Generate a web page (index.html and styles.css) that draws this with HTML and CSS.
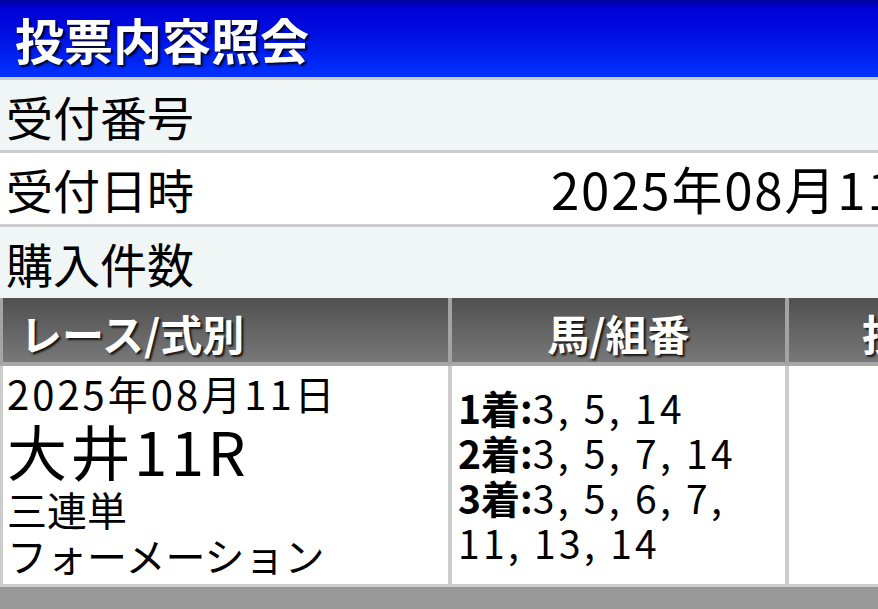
FILE: index.html
```html
<!DOCTYPE html>
<html lang="ja">
<head>
<meta charset="utf-8">
<title>投票内容照会</title>
<link rel="stylesheet" href="styles.css">
</head>
<body>
<div class="page">
  <header class="title-bar">
    <h1 class="title">投票内容照会</h1>
  </header>

  <section class="info">
    <div class="info-row alt">
      <span class="info-label">受付番号</span>
      <span class="info-value"></span>
    </div>
    <div class="info-row">
      <span class="info-label">受付日時</span>
      <span class="info-value">2025年08月11日 17:23</span>
    </div>
    <div class="info-row alt">
      <span class="info-label">購入件数</span>
      <span class="info-value"></span>
    </div>
  </section>

  <section class="bets" role="table">
    <div class="head-cell head-race" role="columnheader">レース/式別</div>
    <div class="head-cell head-center" role="columnheader">馬/組番</div>
    <div class="head-cell head-center" role="columnheader">投票金額</div>

    <div class="body-cell race" role="cell">
      <span class="race-date">2025年08月11日</span>
      <span class="race-name">大井11R</span>
      <span class="race-type">三連単</span>
      <span class="race-type">フォーメーション</span>
    </div>
    <div class="body-cell combo" role="cell">
      <p class="combo-line"><b>1着:</b>3, 5, 14</p>
      <p class="combo-line"><b>2着:</b>3, 5, 7, 14</p>
      <p class="combo-line"><b>3着:</b>3, 5, 6, 7, 11, 13, 14</p>
    </div>
    <div class="body-cell amount" role="cell"></div>
  </section>

  <footer class="footer-bar"></footer>
</div>
</body>
</html>
```

FILE: styles.css
```css
html, body {
  margin: 0;
  padding: 0;
  overflow: hidden;
  background: #999999;
}

body {
  font-family: "Noto Sans CJK JP", "Noto Sans", sans-serif;
  color: #000;
}

.page {
  width: 1110px;
}

/* ---- title bar ---- */
.title-bar {
  height: 77px;
  display: flex;
  align-items: center;
  padding-left: 15px;
  background: linear-gradient(to bottom, #00009a 0px, #0000d6 8px, #0010e2 45%, #0032ff 100%);
}

.title {
  margin: 0;
  font-size: 49px;
  font-weight: 700;
  line-height: 1;
  color: #fff;
  text-shadow: 2px 2px 2px rgba(0, 0, 0, 0.85);
}

/* ---- receipt info rows ---- */
.info-row {
  display: grid;
  grid-template-columns: 545px 1fr;
  align-items: center;
  height: 71px;
  border-top: 3px solid #cccccc;
  background: #ffffff;
  padding-left: 6px;
  box-sizing: content-box;
  font-size: 47px;
  line-height: 1;
  white-space: nowrap;
}

.info-row:first-child {
  height: 70px;
}

.info-row.alt {
  background: #f0f5f5;
}

.info-value {
  font-size: 51px;
  letter-spacing: 1.8px;
}

/* ---- bet table ---- */
.bets {
  display: grid;
  grid-template-columns: 448px 337px 318px;
  grid-template-rows: 68px 221px;
}

.head-cell {
  box-sizing: border-box;
  display: flex;
  align-items: center;
  padding-top: 6px;
  border-left: 4px solid #a4a4a4;
  border-bottom: 4px solid #a8a8a8;
  background: linear-gradient(to bottom, #505050 0%, #646464 50%, #787878 100%);
  color: #fff;
  font-size: 42px;
  font-weight: 700;
  line-height: 1;
  text-shadow: 2px 2px 2px rgba(0, 0, 0, 0.8);
  white-space: nowrap;
}

.head-race {
  border-left-width: 3px;
  padding-left: 17px;
}

.head-center {
  justify-content: center;
}

.body-cell {
  box-sizing: border-box;
  background: #fff;
  border-left: 4px solid #cccccc;
  border-bottom: 3px solid #cccccc;
}

.race {
  border-left-width: 3px;
  padding-left: 4px;
  display: flex;
  flex-direction: column;
  justify-content: center;
}

.race span {
  display: block;
  white-space: nowrap;
}

.race-date {
  font-size: 40px;
  line-height: 42px;
  letter-spacing: 3px;
}

.race-name {
  font-size: 60px;
  line-height: 72px;
  letter-spacing: 3.5px;
}

.race-type {
  font-size: 40px;
  line-height: 46px;
  letter-spacing: 0;
}

.combo {
  padding: 0 8px 0 6px;
  display: flex;
  flex-direction: column;
  justify-content: center;
}

.combo-line {
  margin: 0;
  font-size: 39px;
  line-height: 45px;
  letter-spacing: 3.3px;
}

.combo-line b {
  font-weight: 700;
  letter-spacing: 0;
}

.footer-bar {
  height: 40px;
  background: #999999;
}
```
